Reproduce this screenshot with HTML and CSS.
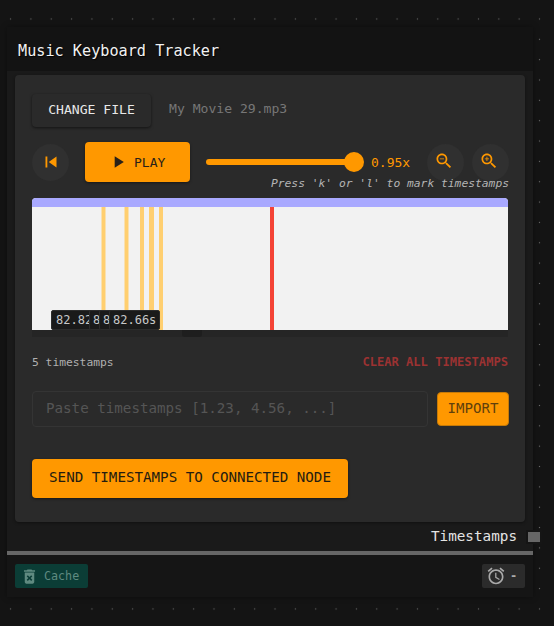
FILE: index.html
```html
<!DOCTYPE html>
<html lang="en">
<head>
    <meta charset="UTF-8">
    <meta name="viewport" content="width=device-width, initial-scale=1.0">
    <title>Music Keyboard Tracker</title>
    <link rel="stylesheet" href="styles.css">
</head>
<body>
    <div class="canvas">
        <div class="node">
            <div class="node-title">Music Keyboard Tracker</div>

            <div class="panel">
                <div class="file-row">
                    <button class="btn-file">CHANGE FILE</button>
                    <span class="file-name">My Movie 29.mp3</span>
                </div>

                <div class="controls">
                    <button class="btn-round">
                        <svg width="22" height="22" viewBox="0 0 24 24"><path d="M6 6h2v12H6zm3.5 6 8.5 6V6z"/></svg>
                    </button>
                    <button class="btn-play">
                        <svg width="20" height="20" viewBox="0 0 24 24"><path d="M8 5v14l11-7z"/></svg>
                        PLAY
                    </button>
                    <div class="slider">
                        <div class="slider-track"></div>
                        <div class="slider-thumb"></div>
                    </div>
                    <span class="speed">0.95x</span>
                    <button class="btn-round btn-zoom">
                        <svg width="20" height="20" viewBox="0 0 24 24"><path d="M15.5 14h-.79l-.28-.27C15.41 12.59 16 11.11 16 9.5 16 5.91 13.09 3 9.5 3S3 5.91 3 9.5 5.91 16 9.5 16c1.61 0 3.09-.59 4.23-1.57l.27.28v.79l5 4.99L20.49 19l-4.99-5zm-6 0C7.01 14 5 11.99 5 9.5S7.01 5 9.5 5 14 7.01 14 9.5 11.99 14 9.5 14zM7 9h5v1H7z"/></svg>
                    </button>
                    <button class="btn-round btn-zoom-in">
                        <svg width="20" height="20" viewBox="0 0 24 24"><path d="M15.5 14h-.79l-.28-.27C15.41 12.59 16 11.11 16 9.5 16 5.91 13.09 3 9.5 3S3 5.91 3 9.5 5.91 16 9.5 16c1.61 0 3.09-.59 4.23-1.57l.27.28v.79l5 4.99L20.49 19l-4.99-5zm-6 0C7.01 14 5 11.99 5 9.5S7.01 5 9.5 5 14 7.01 14 9.5 11.99 14 9.5 14z"/><path d="M12 10h-2v2H9v-2H7V9h2V7h1v2h2v1z"/></svg>
                    </button>
                </div>
                <div class="hint">Press 'k' or 'l' to mark timestamps</div>

                <div class="waveform">
                    <div class="wave-top"></div>
                    <div class="wave-body">
                        <svg class="wave-marks" width="476" height="123" viewBox="0 0 476 123">
                            <g fill="#ffcf70">
                                <rect x="69.5" width="4" height="123"/>
                                <rect x="92.5" width="4" height="123"/>
                                <rect x="108" width="4" height="123"/>
                                <rect x="117" width="5" height="123"/>
                                <rect x="127" width="4" height="123"/>
                            </g>
                            <rect x="238" width="4" height="123" fill="#f44336"/>
                        </svg>
                        <span class="tag tag-1">82.82s</span>
                        <span class="tag tag-2">82.84s</span>
                        <span class="tag tag-3">82.86s</span>
                        <span class="tag tag-4">82.66s</span>
                    </div>
                </div>
                <div class="scroll-strip"><div class="scroll-thumb"></div></div>

                <div class="stats">
                    <span class="count">5 timestamps</span>
                    <span class="clear">CLEAR ALL TIMESTAMPS</span>
                </div>

                <div class="import-row">
                    <input class="paste" type="text" placeholder="Paste timestamps [1.23, 4.56, ...]">
                    <button class="btn-import">IMPORT</button>
                </div>

                <button class="btn-send">SEND TIMESTAMPS TO CONNECTED NODE</button>
            </div>

            <div class="slot">
                <span>Timestamps</span>
                <div class="slot-pin"></div>
            </div>

            <div class="node-footer">
                <button class="btn-cache">
                    <svg width="19" height="19" viewBox="0 0 24 24"><path d="M6 19c0 1.1.9 2 2 2h8c1.1 0 2-.9 2-2V7H6v12zm2.46-7.12 1.41-1.41L12 12.59l2.12-2.12 1.41 1.41L13.41 14l2.12 2.12-1.41 1.41L12 15.41l-2.12 2.12-1.41-1.41L10.59 14l-2.13-2.12zM15.5 4l-1-1h-5l-1 1H5v2h14V4z"/></svg>
                    Cache
                </button>
                <button class="btn-timer">
                    <svg width="20" height="20" viewBox="0 0 24 24"><path d="M22 5.72l-4.6-3.86-1.29 1.53 4.6 3.86L22 5.72zM7.88 3.39 6.6 1.86 2 5.71l1.29 1.53 4.59-3.85zM12.5 8H11v6l4.75 2.85.75-1.23-4-2.37V8zM12 4c-4.97 0-9 4.03-9 9s4.02 9 9 9c4.97 0 9-4.03 9-9s-4.03-9-9-9zm0 16c-3.87 0-7-3.13-7-7s3.13-7 7-7 7 3.13 7 7-3.13 7-7 7z"/></svg>
                    -
                </button>
            </div>
        </div>
    </div>
</body>
</html>
```

FILE: styles.css
```css
* {
    box-sizing: border-box;
}

body {
    margin: 0;
    font-family: "DejaVu Sans Mono", "Liberation Mono", monospace;
    background-color: #141414;
}

button {
    font-family: inherit;
    border: none;
    padding: 0;
}

.canvas {
    width: 554px;
    height: 626px;
    padding: 27px 21px 0 7px;
    background-color: #141414;
    background-image: radial-gradient(circle, #6a6a6a 0.6px, transparent 1px);
    background-size: 20.35px 20.35px;
    background-position: 0.4px 8.8px;
    overflow: hidden;
}

.node {
    position: relative;
    width: 526px;
    height: 570px;
    background-color: #1a1a1a;
    box-shadow: 0 0 6px rgba(0, 0, 0, 0.35);
}

.node-title {
    height: 44px;
    padding-left: 11px;
    line-height: 48px;
    font-size: 15.2px;
    color: #f2f2f2;
    background-color: #131313;
    text-shadow: 1px 1px 1px #000;
}

.panel {
    margin: 4px 8px 0;
    height: 447px;
    padding: 19px 16px 0 17px;
    background-color: #2a2a2a;
    border-radius: 4px;
    box-shadow: 0 1px 3px rgba(0, 0, 0, 0.4);
}

.file-row {
    display: flex;
    align-items: center;
    gap: 18px;
    height: 33px;
}

.btn-file {
    width: 119px;
    height: 33px;
    padding-bottom: 2px;
    font-size: 13.1px;
    color: #e8e8e8;
    background-color: #2a2a2a;
    border-radius: 4px;
    box-shadow: 0 1px 3px rgba(0, 0, 0, 0.55);
}

.file-name {
    margin-bottom: 4px;
    font-size: 13.1px;
    color: #777;
}

.controls {
    display: flex;
    align-items: center;
    height: 40px;
    margin-top: 15px;
}

.btn-round {
    display: flex;
    align-items: center;
    justify-content: center;
    flex: none;
    width: 37px;
    height: 37px;
    border-radius: 50%;
    background-color: #303030;
    fill: #ff9800;
}

.btn-play {
    display: flex;
    align-items: center;
    flex: none;
    gap: 6px;
    width: 105px;
    height: 40px;
    margin-left: 16px;
    padding-left: 23px;
    font-size: 13px;
    color: #2a2118;
    fill: #2a2118;
    background-color: #ff9800;
    border-radius: 4px;
    box-shadow: 0 1px 3px rgba(0, 0, 0, 0.45);
}

.slider {
    display: flex;
    align-items: center;
    width: 158px;
    margin-left: 16px;
}

.slider-track {
    flex: 1;
    height: 6px;
    background-color: #ff9800;
    border-radius: 3px;
}

.slider-thumb {
    flex: none;
    width: 20px;
    height: 20px;
    margin-left: -10px;
    background-color: #ff9800;
    border-radius: 50%;
}

.speed {
    width: 40px;
    margin: 0 16px 0 7px;
    font-size: 13px;
    color: #ff9800;
}

.btn-zoom {
    margin-right: 8px;
    padding: 0 3px 2px 0;
}

.btn-zoom-in {
    padding: 0 3px 2px 0;
}

.hint {
    margin: -5px 0 7px;
    height: 14px;
    line-height: 14px;
    text-align: right;
    font-size: 11.3px;
    font-style: italic;
    color: #b4b4b4;
}

.waveform {
    width: 476px;
    height: 132px;
    border-radius: 4px 4px 0 0;
    overflow: hidden;
    background-color: #f2f2f2;
}

.wave-top {
    height: 9px;
    background-color: #a9a9ff;
}

.wave-body {
    position: relative;
    height: 123px;
}

.wave-marks {
    display: block;
}

.tag {
    position: absolute;
    bottom: 0;
    height: 20px;
    padding: 0 3px;
    line-height: 18px;
    font-size: 12px;
    color: #c8c8c8;
    background-color: #1a1a1a;
    border: 1px solid #2c2c2c;
    border-radius: 2px;
}

.tag-1 {
    left: 19px;
    padding-left: 4px;
}

.tag-2 {
    left: 57px;
}

.tag-3 {
    left: 67px;
}

.tag-4 {
    left: 77px;
}

.scroll-strip {
    width: 476px;
    height: 7px;
    background-color: #252525;
}

.scroll-thumb {
    width: 20px;
    height: 7px;
    margin-left: 150px;
    background-color: #1e1e1e;
    border-radius: 0 0 3px 3px;
}

.stats {
    display: flex;
    justify-content: space-between;
    align-items: center;
    width: 476px;
    height: 16px;
    margin-top: 17px;
}

.count {
    font-size: 11.3px;
    color: #b0b0b0;
}

.clear {
    font-size: 12.1px;
    font-weight: bold;
    color: #9c3232;
}

.import-row {
    display: flex;
    align-items: center;
    gap: 9px;
    height: 36px;
    margin-top: 21px;
}

.paste {
    width: 396px;
    height: 36px;
    padding: 0 13px 2px;
    font-family: inherit;
    font-size: 14.2px;
    color: #ccc;
    background-color: #2a2a2a;
    border: 1px solid #343434;
    border-radius: 4px;
    outline: none;
}

.paste::placeholder {
    color: #555;
    opacity: 1;
}

.btn-import {
    width: 72px;
    height: 34px;
    padding-bottom: 2px;
    font-size: 14.1px;
    color: #5f400c;
    background-color: #ff9800;
    border: 1px solid #c67a08;
    border-radius: 4px;
}

.btn-send {
    display: block;
    width: 316px;
    height: 39px;
    margin-top: 32px;
    padding-bottom: 4px;
    font-size: 14.2px;
    color: #241c10;
    background-color: #ff9800;
    border-radius: 4px;
    box-shadow: 0 1px 3px rgba(0, 0, 0, 0.45);
}

.slot {
    display: flex;
    justify-content: flex-end;
    align-items: center;
    height: 29px;
    padding: 0 16px 2px 0;
    font-size: 14.3px;
    color: #e4e4e4;
}

.slot-pin {
    position: absolute;
    right: -7px;
    top: 505px;
    width: 12px;
    height: 10px;
    background-color: #666;
    box-shadow: 0 0 0 2px #151515;
}

.node-footer {
    display: flex;
    justify-content: space-between;
    align-items: flex-start;
    height: 46px;
    padding: 9px 8px 0;
    background-color: #151515;
    border-top: 4px solid #666;
}

.btn-cache {
    display: flex;
    align-items: center;
    gap: 5px;
    width: 73px;
    height: 24px;
    padding-left: 5px;
    font-size: 11.7px;
    color: #5f8a80;
    fill: #5f8a80;
    background-color: #0b3d36;
    border-radius: 2px;
}

.btn-timer {
    display: flex;
    align-items: center;
    gap: 4px;
    width: 43px;
    height: 24px;
    padding-left: 4px;
    font-size: 12px;
    font-weight: bold;
    color: #aaa;
    fill: #aaa;
    background-color: #2b2b2b;
    border-radius: 2px;
}
```
